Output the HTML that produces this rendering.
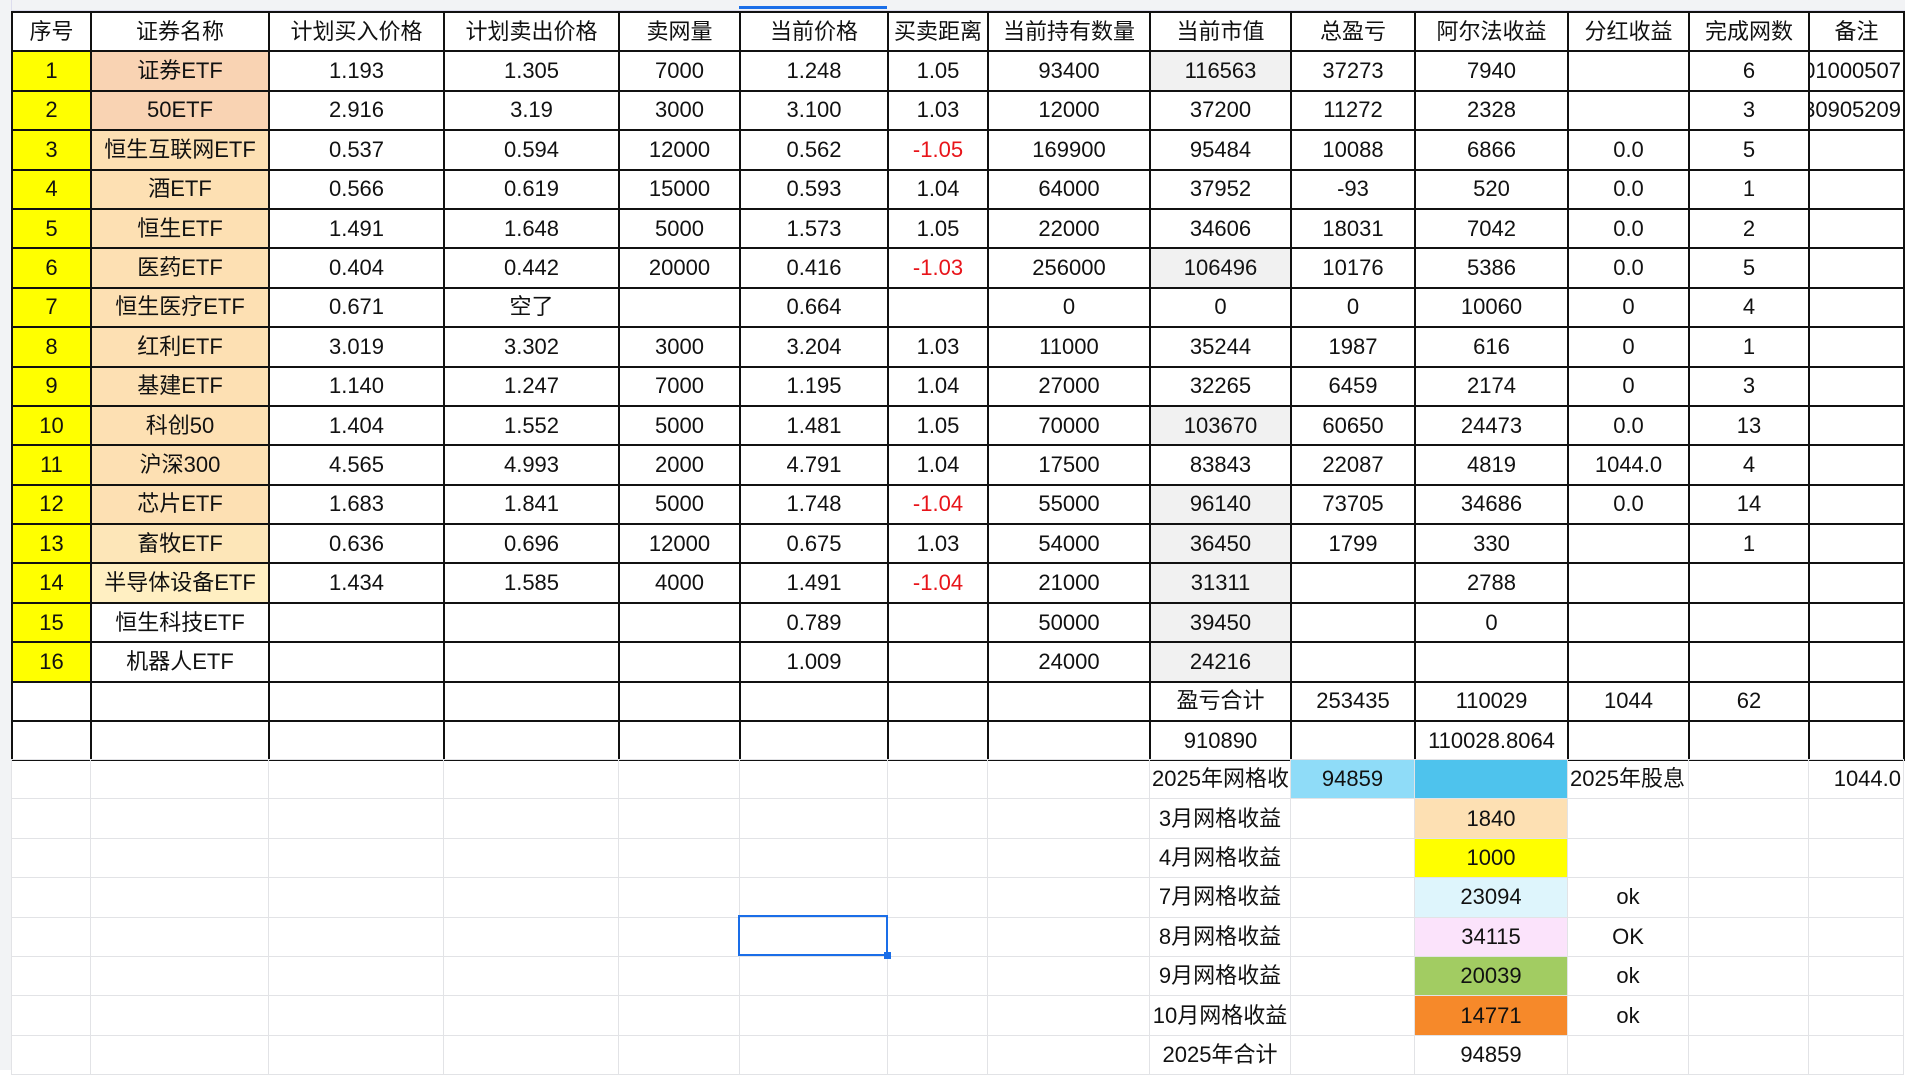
<!DOCTYPE html>
<html><head><meta charset="utf-8">
<style>
*{margin:0;padding:0;box-sizing:border-box}
body{width:1905px;height:1070px;overflow:hidden;background:#fff;font-family:"Liberation Sans","Noto Sans CJK SC",sans-serif;font-size:22px;color:#111;position:relative}
.top{position:absolute;left:0;top:0;width:1905px;height:11px;background:#f2f3f5;border-bottom:1px solid #dde}
.gut{position:absolute;left:0;top:0;width:12px;height:1070px;background:#f2f3f5;border-right:1px solid #dde}
table{position:absolute;left:11px;border-collapse:collapse;table-layout:fixed;width:1892px}
td{text-align:center;white-space:nowrap;overflow:hidden;padding:0 2px;line-height:36px}
#t1{top:11px}
#t1 td{border:2px solid #111;height:39.4px}
#t2{top:759px}
#t2 td{border:1px solid #e2e3e6;height:39.4px}
.y{background:#ffff00}
.p1{background:#f9d3b3}
.p2{background:#fde0b3}
.p3{background:#fde6b8}
.p4{background:#ffefc2}
.g{background:#f1f1f1}
.r{color:#e8141a}
.sel{position:absolute;left:738px;top:915px;width:150px;height:41px;border:2.5px solid #1a6ee8}
.sel:after{content:"";position:absolute;right:-5px;bottom:-5px;width:7px;height:7px;background:#1a6ee8}
.hl{position:absolute;left:739px;top:6px;width:148px;height:3px;background:#1a6ee8}
</style></head><body>
<div class="top"></div><div class="gut"></div><div class="hl"></div>
<table id="t1">
<colgroup><col style="width:79px"><col style="width:178px"><col style="width:175px"><col style="width:175px"><col style="width:121px"><col style="width:148px"><col style="width:100px"><col style="width:162px"><col style="width:141px"><col style="width:124px"><col style="width:153px"><col style="width:121px"><col style="width:120px"><col style="width:95px"></colgroup>
<tr><td>序号</td><td>证券名称</td><td>计划买入价格</td><td>计划卖出价格</td><td>卖网量</td><td>当前价格</td><td>买卖距离</td><td>当前持有数量</td><td>当前市值</td><td>总盈亏</td><td>阿尔法收益</td><td>分红收益</td><td>完成网数</td><td>备注</td></tr>
<tr><td class="y">1</td><td class="p1">证券ETF</td><td>1.193</td><td>1.305</td><td>7000</td><td>1.248</td><td>1.05</td><td>93400</td><td class="g">116563</td><td>37273</td><td>7940</td><td></td><td>6</td><td style="text-align:left;direction:rtl">01000507</td></tr>
<tr><td class="y">2</td><td class="p1">50ETF</td><td>2.916</td><td>3.19</td><td>3000</td><td>3.100</td><td>1.03</td><td>12000</td><td>37200</td><td>11272</td><td>2328</td><td></td><td>3</td><td style="text-align:left;direction:rtl">30905209</td></tr>
<tr><td class="y">3</td><td class="p2">恒生互联网ETF</td><td>0.537</td><td>0.594</td><td>12000</td><td>0.562</td><td class="r">-1.05</td><td>169900</td><td>95484</td><td>10088</td><td>6866</td><td>0.0</td><td>5</td><td></td></tr>
<tr><td class="y">4</td><td class="p2">酒ETF</td><td>0.566</td><td>0.619</td><td>15000</td><td>0.593</td><td>1.04</td><td>64000</td><td>37952</td><td>-93</td><td>520</td><td>0.0</td><td>1</td><td></td></tr>
<tr><td class="y">5</td><td class="p2">恒生ETF</td><td>1.491</td><td>1.648</td><td>5000</td><td>1.573</td><td>1.05</td><td>22000</td><td>34606</td><td>18031</td><td>7042</td><td>0.0</td><td>2</td><td></td></tr>
<tr><td class="y">6</td><td class="p2">医药ETF</td><td>0.404</td><td>0.442</td><td>20000</td><td>0.416</td><td class="r">-1.03</td><td>256000</td><td class="g">106496</td><td>10176</td><td>5386</td><td>0.0</td><td>5</td><td></td></tr>
<tr><td class="y">7</td><td class="p2">恒生医疗ETF</td><td>0.671</td><td>空了</td><td></td><td>0.664</td><td></td><td>0</td><td>0</td><td>0</td><td>10060</td><td>0</td><td>4</td><td></td></tr>
<tr><td class="y">8</td><td class="p2">红利ETF</td><td>3.019</td><td>3.302</td><td>3000</td><td>3.204</td><td>1.03</td><td>11000</td><td>35244</td><td>1987</td><td>616</td><td>0</td><td>1</td><td></td></tr>
<tr><td class="y">9</td><td class="p2">基建ETF</td><td>1.140</td><td>1.247</td><td>7000</td><td>1.195</td><td>1.04</td><td>27000</td><td>32265</td><td>6459</td><td>2174</td><td>0</td><td>3</td><td></td></tr>
<tr><td class="y">10</td><td class="p2">科创50</td><td>1.404</td><td>1.552</td><td>5000</td><td>1.481</td><td>1.05</td><td>70000</td><td class="g">103670</td><td>60650</td><td>24473</td><td>0.0</td><td>13</td><td></td></tr>
<tr><td class="y">11</td><td class="p2">沪深300</td><td>4.565</td><td>4.993</td><td>2000</td><td>4.791</td><td>1.04</td><td>17500</td><td>83843</td><td>22087</td><td>4819</td><td>1044.0</td><td>4</td><td></td></tr>
<tr><td class="y">12</td><td class="p2">芯片ETF</td><td>1.683</td><td>1.841</td><td>5000</td><td>1.748</td><td class="r">-1.04</td><td>55000</td><td class="g">96140</td><td>73705</td><td>34686</td><td>0.0</td><td>14</td><td></td></tr>
<tr><td class="y">13</td><td class="p3">畜牧ETF</td><td>0.636</td><td>0.696</td><td>12000</td><td>0.675</td><td>1.03</td><td>54000</td><td class="g">36450</td><td>1799</td><td>330</td><td></td><td>1</td><td></td></tr>
<tr><td class="y">14</td><td class="p4">半导体设备ETF</td><td>1.434</td><td>1.585</td><td>4000</td><td>1.491</td><td class="r">-1.04</td><td>21000</td><td class="g">31311</td><td></td><td>2788</td><td></td><td></td><td></td></tr>
<tr><td class="y">15</td><td>恒生科技ETF</td><td></td><td></td><td></td><td>0.789</td><td></td><td>50000</td><td class="g">39450</td><td></td><td>0</td><td></td><td></td><td></td></tr>
<tr><td class="y">16</td><td>机器人ETF</td><td></td><td></td><td></td><td>1.009</td><td></td><td>24000</td><td class="g">24216</td><td></td><td></td><td></td><td></td><td></td></tr>
<tr><td></td><td></td><td></td><td></td><td></td><td></td><td></td><td></td><td>盈亏合计</td><td>253435</td><td>110029</td><td>1044</td><td>62</td><td></td></tr>
<tr><td></td><td></td><td></td><td></td><td></td><td></td><td></td><td></td><td>910890</td><td></td><td>110028.8064</td><td></td><td></td><td></td></tr>
</table>
<table id="t2">
<colgroup><col style="width:79px"><col style="width:178px"><col style="width:175px"><col style="width:175px"><col style="width:121px"><col style="width:148px"><col style="width:100px"><col style="width:162px"><col style="width:141px"><col style="width:124px"><col style="width:153px"><col style="width:121px"><col style="width:120px"><col style="width:95px"></colgroup>
<tr><td></td><td></td><td></td><td></td><td></td><td></td><td></td><td></td><td style="text-align:left">2025年网格收</td><td style="background:#8fdcf8">94859</td><td style="background:#4ec3ed"></td><td style="text-align:left;overflow:visible">2025年股息</td><td></td><td style="text-align:right">1044.0</td></tr>
<tr><td></td><td></td><td></td><td></td><td></td><td></td><td></td><td></td><td>3月网格收益</td><td></td><td style="background:#fde0b3">1840</td><td></td><td></td><td></td></tr>
<tr><td></td><td></td><td></td><td></td><td></td><td></td><td></td><td></td><td>4月网格收益</td><td></td><td style="background:#ffff00">1000</td><td></td><td></td><td></td></tr>
<tr><td></td><td></td><td></td><td></td><td></td><td></td><td></td><td></td><td>7月网格收益</td><td></td><td style="background:#def5fc">23094</td><td>ok</td><td></td><td></td></tr>
<tr><td></td><td></td><td></td><td></td><td></td><td></td><td></td><td></td><td>8月网格收益</td><td></td><td style="background:#fbe3fb">34115</td><td>OK</td><td></td><td></td></tr>
<tr><td></td><td></td><td></td><td></td><td></td><td></td><td></td><td></td><td>9月网格收益</td><td></td><td style="background:#a2cc62">20039</td><td>ok</td><td></td><td></td></tr>
<tr><td></td><td></td><td></td><td></td><td></td><td></td><td></td><td></td><td>10月网格收益</td><td></td><td style="background:#f6892a">14771</td><td>ok</td><td></td><td></td></tr>
<tr><td></td><td></td><td></td><td></td><td></td><td></td><td></td><td></td><td>2025年合计</td><td></td><td>94859</td><td></td><td></td><td></td></tr>
</table>
<div class="sel"></div>
</body></html>
